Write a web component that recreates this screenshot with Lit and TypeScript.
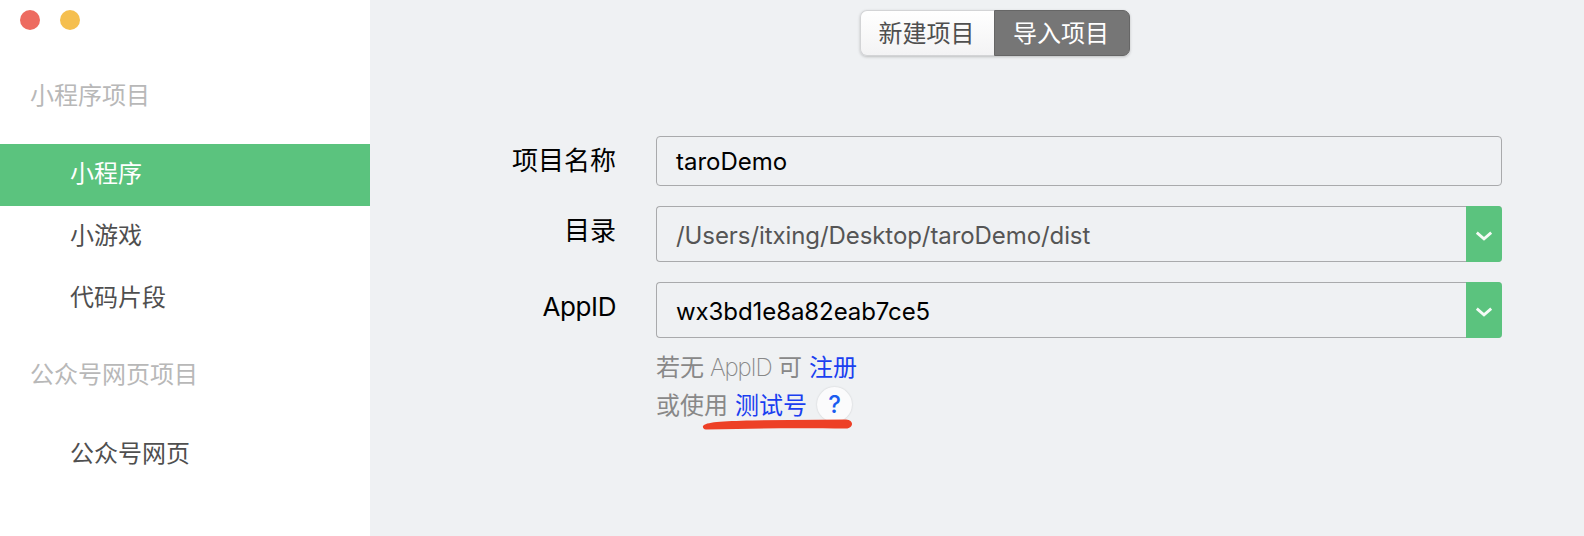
import { LitElement, html, css } from "lit";
import { customElement, property, state } from "lit/decorators.js";
import { classMap } from "lit/directives/class-map.js";

const sections = [
  { title: "小程序项目", items: ["小程序", "小游戏", "代码片段"] },
  { title: "公众号网页项目", items: ["公众号网页"] },
];

@customElement("side-nav")
class SideNav extends LitElement {
  @state() active = "小程序";

  static styles = css`
    :host { display: block; width: 370px; flex: none; background: #fff; box-sizing: border-box; padding-top: 10px; }
    .lights { display: flex; gap: 20px; padding-left: 20px; height: 20px; margin-bottom: 49px; }
    .light { width: 20px; height: 20px; border-radius: 50%; }
    .close { background: #ed6b60; }
    .minimize { background: #f5bf4f; }
    .title { height: 30px; line-height: 30px; padding-left: 30px; color: #b8b8b8; margin-bottom: 35px; }
    .section + .section { margin-top: 28px; }
    .section + .section .title { margin-bottom: 36px; }
    .item { height: 62px; line-height: 56px; padding-left: 70px; color: #4f4f4f; cursor: pointer; }
    .item.active { line-height: 55px; background: #5bc37e; color: #fff; }
  `;

  render() {
    return html`
      <div class="lights"><span class="light close"></span><span class="light minimize"></span></div>
      ${sections.map((s) => html`
        <div class="section">
          <div class="title">${s.title}</div>
          ${s.items.map((i) => html`
            <div class=${classMap({ item: true, active: i === this.active })} @click=${() => (this.active = i)}>${i}</div>`)}
        </div>`)}
    `;
  }
}

@customElement("field-row")
class FieldRow extends LitElement {
  @property() label = "";
  @property() value = "";
  @property({ type: Boolean }) select = false;

  static styles = css`
    :host { display: flex; align-items: flex-start; }
    .label { width: 246px; margin-right: 40px; text-align: right; font-size: 26px; line-height: 46px; color: #000; }
    .box { flex: 1; height: 50px; box-sizing: border-box; display: flex; border: 1px solid #a9aaac; border-radius: 4px; padding-left: 19px; }
    .value { flex: 1; font-family: Inter, "Noto Sans CJK SC", sans-serif; font-size: 24px; line-height: 50px; color: #000; }
    .box.select { height: 56px; border-right: 0; }
    .select .value { line-height: 58px; letter-spacing: -0.08px; }
    .arrow { width: 36px; margin: -1px 0; background: #5bc37e; border-radius: 0 4px 4px 0; display: flex; align-items: center; justify-content: center; }
    .arrow svg { margin-top: 3px; }
    .label.latin { font-family: Inter, sans-serif; line-height: 50px; letter-spacing: -0.4px; }
    .value.path { color: #555; }
  `;

  render() {
    return html`
      <div class=${classMap({ label: true, latin: this.label === "AppID" })}>${this.label}</div>
      <div class=${classMap({ box: true, select: this.select })}>
        <div class=${classMap({ value: true, path: this.value.startsWith("/") })}>${this.value}</div>
        ${this.select ? html`
          <div class="arrow">
            <svg width="18" height="12" viewBox="0 0 18 12" fill="none" stroke="#f4faf6" stroke-width="2.8"><path d="M1.8 2.6 9 8.8l7.2-6.2" /></svg>
          </div>` : ""}
      </div>
    `;
  }
}

@customElement("app-root")
class AppRoot extends LitElement {
  static styles = css`
    :host { display: flex; width: 1584px; height: 536px; overflow: hidden; background: #eff1f3; font: 24px "Noto Sans CJK SC", sans-serif; font-weight: 400; }
    .main { flex: 1; padding-top: 10px; }
    .tabs { display: flex; width: 270px; height: 46px; box-sizing: border-box; margin-left: 490px; border-radius: 7px; box-shadow: 0 1px 3px rgba(0, 0, 0, 0.22); margin-bottom: 80px; }
    .tab { box-sizing: border-box; height: 46px; line-height: 41px; text-align: center; border: 1px solid #d3d4d6; color: #4f4f4f; }
    .new { width: 134px; padding-right: 2px; border-right: 0; border-radius: 7px 0 0 7px; background: linear-gradient(#fff, #f3f3f4); }
    .import { width: 136px; padding-right: 2px; border-color: #666; border-radius: 0 7px 7px 0; background: #767676; color: #fff; }
    .form { display: flex; flex-direction: column; gap: 20px; width: 1132px; }
    .hints { margin: 9px 0 0 286px; color: #888; }
    .line { display: flex; align-items: center; height: 38px; line-height: 36px; white-space: pre; }
    .thin { font-family: Inter, sans-serif; font-weight: 200; letter-spacing: -1.2px; width: 62px; margin: 3px 6px 0 6px; }
    .link { color: #1a3ff0; margin-left: 7px; }
    .help { width: 35px; height: 35px; margin: 1px 0 0 10px; border-radius: 50%; background: #fbfbfc; box-shadow: 0 0 2px rgba(0, 0, 0, 0.16); display: flex; align-items: center; justify-content: center; font: 500 24px Inter, sans-serif; color: #1a5cf0; }
    .test { position: relative; }
    .stroke { position: absolute; left: 46px; top: 34px; }
  `;

  render() {
    return html`
      <side-nav></side-nav>
      <div class="main">
        <div class="tabs"><div class="tab new">新建项目</div><div class="tab import">导入项目</div></div>
        <div class="form">
          <field-row label="项目名称" value="taroDemo"></field-row>
          <field-row label="目录" value="/Users/itxing/Desktop/taroDemo/dist" select></field-row>
          <field-row label="AppID" value="wx3bd1e8a82eab7ce5" select></field-row>
        </div>
        <div class="hints">
          <div class="line"><span>若无</span><span class="thin">AppID</span><span>可</span><span class="link">注册</span></div>
          <div class="line test">
            <span>或使用</span><span class="link">测试号</span><span class="help">?</span>
            <svg class="stroke" width="152" height="12" viewBox="0 0 152 12"><path fill="#ed4026" d="M1 7C3 3 20 2 50 1.4L144 .4C148 .5 150 3 150 5S148 9.3 144 9.6C110 9 70 9 35 10L4 10.4C1.5 10.3 .6 8.5 1 7Z" /></svg>
          </div>
        </div>
      </div>
    `;
  }
}
